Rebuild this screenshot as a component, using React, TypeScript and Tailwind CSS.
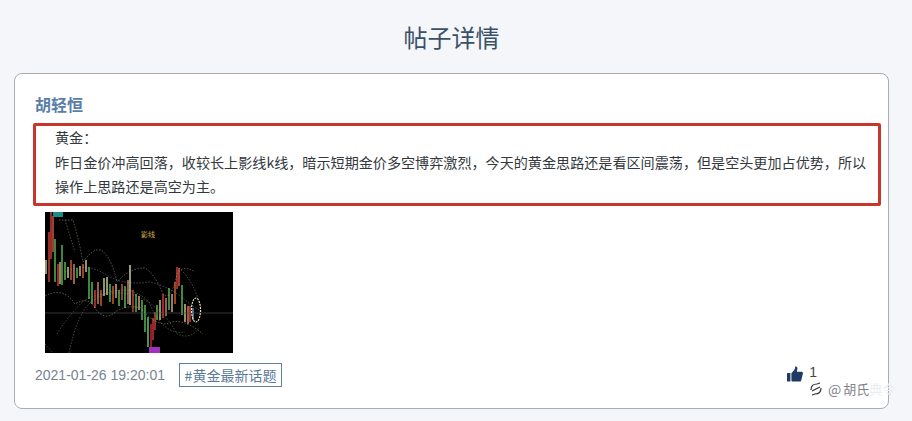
const candles: [number, number, number, string][] = [
  [1, 48, 62, '#e8e0a0'], [4, 20, 70, '#e8483c'], [6, 0, 47, '#e8483c'], [8, 4, 40, '#f06050'], [10, 27, 70, '#5fd35f'],
  [13, 52, 74, '#e8483c'], [15, 50, 72, '#f0c090'], [17, 33, 73, '#5fd35f'], [20, 50, 68, '#5fd35f'], [23, 55, 66, '#f0e0a0'],
  [26, 48, 68, '#e8683c'], [29, 52, 72, '#f09070'], [32, 56, 66, '#5fd35f'], [35, 54, 64, '#f0d090'], [38, 52, 66, '#e8683c'],
  [41, 48, 60, '#f0e0a0'], [44, 55, 87, '#5fd35f'], [47, 70, 92, '#5fd35f'], [50, 78, 96, '#e8483c'], [53, 70, 92, '#f09070'],
  [56, 78, 94, '#e8683c'], [59, 66, 84, '#c8f0a0'], [62, 65, 83, '#f0e0a0'], [65, 72, 90, '#5fd35f'], [68, 74, 92, '#e8683c'],
  [71, 72, 86, '#f0c090'], [74, 78, 94, '#5fd35f'], [77, 72, 88, '#e8683c'], [80, 74, 96, '#5fd35f'], [83, 68, 92, '#f09070'],
  [85, 53, 93, '#e8f0c0'], [88, 78, 100, '#e8483c'], [91, 82, 100, '#5fd35f'], [94, 84, 98, '#f0c090'], [97, 88, 108, '#5fd35f'],
  [100, 93, 120, '#5fd35f'], [103, 105, 135, '#7be07b'], [106, 112, 136, '#e02c3c'], [108, 106, 128, '#e83c3c'], [110, 100, 118, '#e8483c'],
  [112, 93, 108, '#5fd35f'], [115, 88, 108, '#f0e0a0'], [118, 82, 106, '#e8483c'], [121, 86, 104, '#f09070'], [124, 76, 98, '#5fd35f'],
  [127, 82, 100, '#f0c090'], [130, 70, 92, '#e8683c'], [132, 55, 77, '#e8483c'], [134, 56, 74, '#f06050'], [137, 73, 103, '#5fd35f'],
  [140, 92, 110, '#e8e0a0'], [143, 94, 112, '#f09070'], [145, 94, 110, '#e8483c'], [148, 96, 108, '#7fa8c8'],
]

function Chart() {
  return (
    <svg viewBox="0 0 188 141" className="block h-[141px] w-[188px] bg-black">
      <g className="blur-[0.3px]">
        {candles.map(([x, top, bottom, color]) => (
          <line key={x} x1={x} y1={top} x2={x} y2={bottom} stroke={color} strokeWidth="1.3" />
        ))}
      </g>
      <rect x="8" y="0" width="10" height="5" fill="#1f8a8a" />
      <rect x="104" y="135" width="11" height="6" fill="#a030c0" />
      <line x1="0" y1="101" x2="188" y2="101" stroke="#4a4a4a" strokeWidth="0.7" />
      <g fill="none" strokeWidth="0.6" strokeDasharray="1.5 1.5" opacity="0.7">
        <path d="M14 8 L28 8 Q34 28 38 50 Q48 36 56 38 Q66 44 72 70 Q84 56 100 56 Q110 62 118 82 Q126 90 132 62 Q138 52 150 60" stroke="#d8d8b8" />
        <path d="M0 84 Q18 74 30 92 Q44 84 50 96 Q58 108 68 102 Q80 92 96 96 Q108 112 122 112 Q136 104 158 122" stroke="#e0e0b8" />
        <path d="M0 132 L8 141 M12 122 Q24 102 40 88 Q60 78 86 82 Q116 92 132 122 Q146 128 154 116" stroke="#a8a888" />
        <path d="M20 60 Q40 50 60 62 Q78 74 104 70 Q124 74 140 88 Q150 96 158 100" stroke="#8fb8d8" />
        <path d="M24 141 Q32 102 46 90 Q80 66 104 90 Q118 124 140 120" stroke="#a8b890" />
        <path d="M134 56 Q150 70 156 98 M20 8 L30 40" stroke="#b8b898" />
      </g>
      <ellipse cx="151" cy="98" rx="4.5" ry="12" fill="none" stroke="#f0e4c8" strokeWidth="1.1" strokeDasharray="2 1" />
      <text x="96" y="25" fill="#d8b040" fontSize="7" fontFamily="'Noto Sans CJK SC', sans-serif">影线</text>
    </svg>
  )
}

function ThumbUp() {
  return (
    <svg viewBox="0 0 16 16" className="h-4 w-4 fill-[#1f3a63]">
      <rect x="0" y="7" width="3.4" height="8.5" rx="0.5" />
      <path d="M4.4 7.2 L7.6 3.6 C8 2.8 8 1.6 8.2 0.6 C9.6 0.2 10.6 1.4 10.4 3 L9.8 5.8 L14.4 5.8 C15.8 5.8 16.2 7 15.8 8 L14.2 14.4 C14 15.2 13.4 15.6 12.6 15.6 L6 15.6 C5 15.6 4.4 15 4.4 14.4 Z" />
    </svg>
  )
}

export default function App() {
  return (
    <div className="h-[421px] w-[912px] overflow-hidden bg-[#f4f6fa] font-['Microsoft_YaHei','Noto_Sans_CJK_SC',sans-serif]">
      <h1 className="h-[73px] pr-[9px] pt-[19px] text-center text-[24px] leading-[36px] font-normal text-[#3a5068]">帖子详情</h1>
      <div className="relative ml-[14px] h-[336px] w-[875px] rounded-[8px] border border-[#a9adb3] bg-white pl-[18px] pr-[8px] pt-[20px]">
        <div className="h-[29px] pl-[2px] text-[16px] leading-[20px] font-bold text-[#5b7ea8]">胡轻恒</div>
        <div className="h-[83px] w-[848px] rounded-[2px] border-[3px] border-[#c8352b] pl-[19px] text-[14.1px] leading-[24.5px] text-[#33383d]">
          <p className="-mt-[1px]">黄金：</p>
          <p className="w-[818px]">昨日金价冲高回落，收较长上影线k线，暗示短期金价多空博弈激烈，今天的黄金思路还是看区间震荡，但是空头更加占优势，所以操作上思路还是高空为主。</p>
        </div>
        <div className="ml-[12px] mt-[6px]">
          <Chart />
        </div>
        <div className="mt-[10px] flex h-[24px] items-center pr-[63px]">
          <span className="pl-[2px] font-['Liberation_Sans',sans-serif] text-[14px] text-[#78838f]">2021-01-26 19:20:01</span>
          <span className="ml-[14px] flex h-[24px] w-[103px] items-center justify-center border border-[#5f8199] text-[14px] text-[#5a7a96]">#黄金最新话题</span>
          <div className="ml-auto flex items-center gap-[6px] pb-[2px] text-[14px] text-[#444] font-['Liberation_Sans',sans-serif]">
            <ThumbUp />
            <span className="-mt-[4px]">1</span>
          </div>
        </div>
        <div className="absolute left-[794px] top-[306px] flex items-center gap-[5px] text-[13px] leading-[18px] text-[#7f848b]">
          <svg viewBox="0 0 14 14" className="h-[14px] w-[14px]" fill="none" stroke="#333" strokeWidth="1.2">
            <path d="M2 8 Q2 2 8 2 L11 1 M12 6 Q12 12 6 12 L3 13 M3 9 L11 5" />
          </svg>
          <span className="whitespace-nowrap text-[14px]">@</span>
          <span className="-ml-[3px] whitespace-nowrap">胡氏<span className="text-[#e9ecf1]">典令</span></span>
        </div>
      </div>
    </div>
  )
}
